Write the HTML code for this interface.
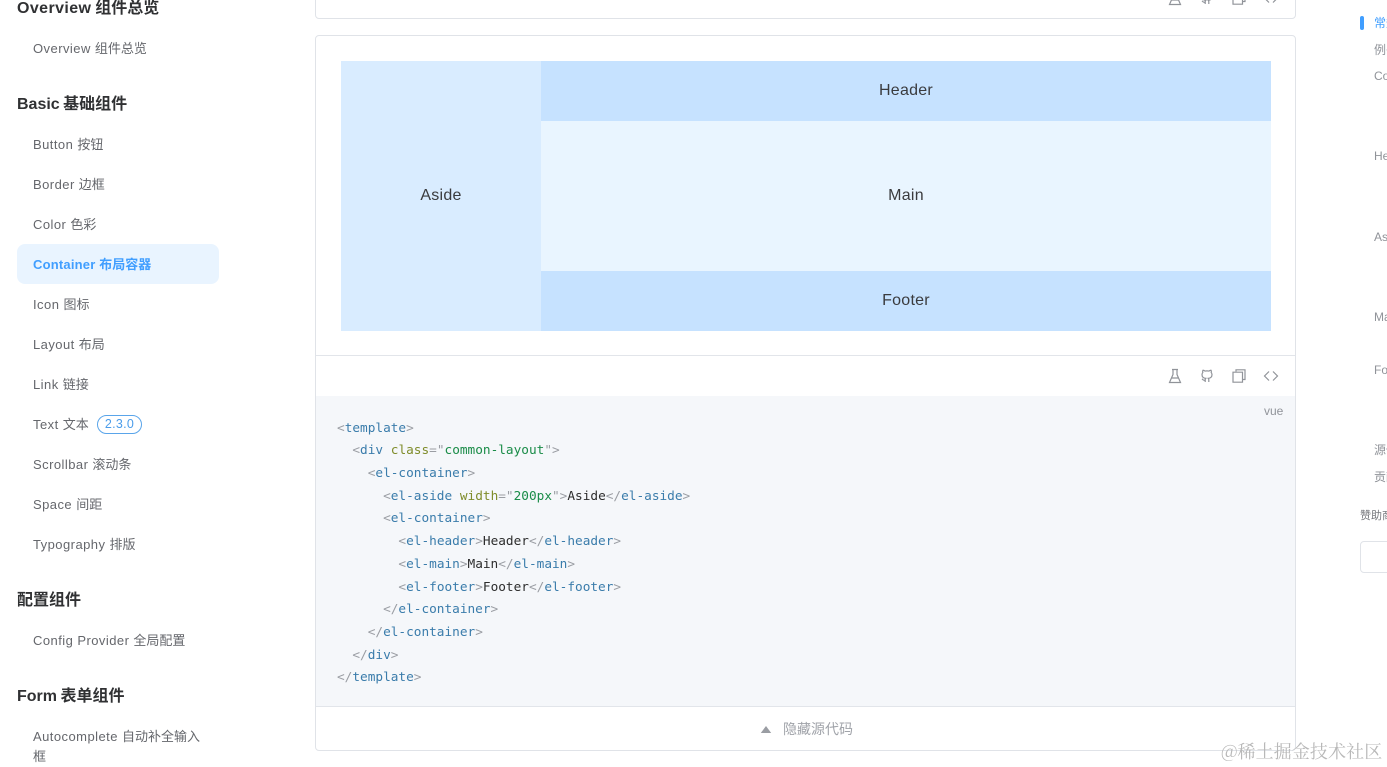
<!DOCTYPE html>
<html><head><meta charset="utf-8"><style>
html,body{margin:0;padding:0;background:#fff}
body{position:relative;width:1387px;height:767px;overflow:hidden;font-family:"Liberation Sans","Noto Sans CJK SC",sans-serif}
.a{position:absolute;white-space:nowrap}
em{font-style:normal;letter-spacing:0}
.h{left:17px;height:24px;line-height:24px;font-size:16px;font-weight:700;color:#303133;word-spacing:-1px}
.i{left:33px;height:20px;line-height:20px;font-size:13px;letter-spacing:.45px;color:#65676c}
.t{left:1374px;height:16px;line-height:16px;font-size:12px;color:#909399}
.c{height:24px;line-height:24px;font-size:16px;letter-spacing:.25px;color:#3a3b3e;text-align:center}
pre{position:absolute;margin:0;left:337px;top:417.500px;font:12.75px/22.72px "DejaVu Sans Mono",monospace;color:#2c2c2c}
pre b{font-weight:400;color:#9a9da3}pre i{font-style:normal;color:#3a7cab}pre u{text-decoration:none;color:#7f8c2a}pre s{text-decoration:none;color:#1a8c48}
svg{position:absolute;fill:none;stroke:#909399;stroke-width:1.200}
</style></head><body>
<div class="a h" style="top:-3px;letter-spacing:.4px">Overview <em>组件总览</em></div>
<div class="a i" style="top:39px">Overview <em>组件总览</em></div>
<div class="a h" style="top:93px">Basic <em>基础组件</em></div>
<div class="a i" style="top:135px">Button <em>按钮</em></div>
<div class="a i" style="top:175px">Border <em>边框</em></div>
<div class="a i" style="top:215px">Color <em>色彩</em></div>
<div class="a" style="left:17px;top:244px;width:202px;height:40px;background:#e9f4ff;border-radius:8px"></div>
<div class="a i" style="top:255px;color:#409eff;font-weight:700;letter-spacing:.2px">Container <em>布局容器</em></div>
<div class="a i" style="top:295px">Icon <em>图标</em></div>
<div class="a i" style="top:335px">Layout <em>布局</em></div>
<div class="a i" style="top:375px">Link <em>链接</em></div>
<div class="a i" style="top:415px">Text <em>文本</em></div>
<div class="a" style="left:97px;top:415px;width:43px;height:17px;line-height:17px;border:1px solid #5aa5ea;border-radius:10px;text-align:center;font-size:12.500px;color:#4a9cea;letter-spacing:.3px">2.3.0</div>
<div class="a i" style="top:455px">Scrollbar <em>滚动条</em></div>
<div class="a i" style="top:495px">Space <em>间距</em></div>
<div class="a i" style="top:535px">Typography <em>排版</em></div>
<div class="a h" style="top:589px">配置组件</div>
<div class="a i" style="top:631px">Config Provider <em>全局配置</em></div>
<div class="a h" style="top:685px">Form <em>表单组件</em></div>
<div class="a i" style="top:727px">Autocomplete <em>自动补全输入</em></div>
<div class="a i" style="top:747px"><em>框</em></div>

<div class="a" style="left:315px;top:-20px;width:979px;height:37px;border:1px solid #e0e3e8;border-radius:4px"></div>
<div class="a" style="left:315px;top:35px;width:979px;height:714px;border:1px solid #e0e3e8;border-radius:4px"></div>
<div class="a" style="left:341px;top:61px;width:200px;height:270px;background:#d9ecff"></div>
<div class="a" style="left:541px;top:61px;width:730px;height:60px;background:#c6e2ff"></div>
<div class="a" style="left:541px;top:121px;width:730px;height:150px;background:#e9f5ff"></div>
<div class="a" style="left:541px;top:271px;width:730px;height:60px;background:#c6e2ff"></div>
<div class="a c" style="left:341px;top:184px;width:200px">Aside</div>
<div class="a c" style="left:541px;top:79px;width:730px">Header</div>
<div class="a c" style="left:541px;top:184px;width:730px">Main</div>
<div class="a c" style="left:541px;top:289px;width:730px">Footer</div>
<div class="a" style="left:316px;top:355px;width:979px;height:1px;background:#e2e5ea"></div>
<div class="a" style="left:316px;top:396px;width:979px;height:310px;background:#f5f7fa"></div>
<div class="a" style="left:316px;top:706px;width:979px;height:1px;background:#e2e5ea"></div>
<div class="a" style="left:1264px;top:404px;font-size:12px;line-height:14px;color:#909399">vue</div>
<pre><b>&lt;</b><i>template</i><b>&gt;</b>
  <b>&lt;</b><i>div</i> <u>class</u><b>="</b><s>common-layout</s><b>"&gt;</b>
    <b>&lt;</b><i>el-container</i><b>&gt;</b>
      <b>&lt;</b><i>el-aside</i> <u>width</u><b>="</b><s>200px</s><b>"&gt;</b>Aside<b>&lt;/</b><i>el-aside</i><b>&gt;</b>
      <b>&lt;</b><i>el-container</i><b>&gt;</b>
        <b>&lt;</b><i>el-header</i><b>&gt;</b>Header<b>&lt;/</b><i>el-header</i><b>&gt;</b>
        <b>&lt;</b><i>el-main</i><b>&gt;</b>Main<b>&lt;/</b><i>el-main</i><b>&gt;</b>
        <b>&lt;</b><i>el-footer</i><b>&gt;</b>Footer<b>&lt;/</b><i>el-footer</i><b>&gt;</b>
      <b>&lt;/</b><i>el-container</i><b>&gt;</b>
    <b>&lt;/</b><i>el-container</i><b>&gt;</b>
  <b>&lt;/</b><i>div</i><b>&gt;</b>
<b>&lt;/</b><i>template</i><b>&gt;</b></pre>

<svg style="left:1167px;top:368px" width="16" height="16" viewBox="0 0 16 16"><path d="M5 1.500h6M6 1.500v5L2.500 14.500h11L10 6.500v-5M4.500 10h7"/></svg>
<svg style="left:1199px;top:368px" width="16" height="16" viewBox="0 0 16 16"><path d="M6.200 14v-2.300c0-.6.200-1 .5-1.300-2-.2-3.700-1-3.700-3.900 0-.8.3-1.500.8-2-.1-.3-.3-1.100.1-2.200 0 0 .7-.2 2.200.8a7.500 7.500 0 0 1 3.800 0c1.500-1 2.200-.8 2.200-.8.400 1.100.200 1.900.100 2.200.5.500.8 1.200.8 2 0 2.900-1.700 3.700-3.700 3.900.3.300.5.700.5 1.300V14M6.200 12.300c-2 .4-2.600-1-3.200-1.500"/></svg>
<svg style="left:1231px;top:368px" width="16" height="16" viewBox="0 0 16 16"><path d="M5 3.500V1.800h9v9.700h-2.500M2 4.200h9.500v10H2z"/></svg>
<svg style="left:1263px;top:368px" width="16" height="16" viewBox="0 0 16 16"><path d="M6 3.500L1.500 8 6 12.500M10 3.500L14.500 8 10 12.500"/></svg>
<svg style="left:1167px;top:-10px" width="16" height="16" viewBox="0 0 16 16"><path d="M5 1.500h6M6 1.500v5L2.500 14.500h11L10 6.500v-5M4.500 10h7"/></svg>
<svg style="left:1199px;top:-10px" width="16" height="16" viewBox="0 0 16 16"><path d="M6.200 14v-2.300c0-.6.200-1 .5-1.300-2-.2-3.700-1-3.700-3.900 0-.8.3-1.500.8-2-.1-.3-.3-1.100.1-2.200 0 0 .7-.2 2.200.8a7.500 7.500 0 0 1 3.800 0c1.500-1 2.200-.8 2.200-.8.400 1.100.200 1.900.100 2.200.5.500.8 1.200.8 2 0 2.900-1.700 3.700-3.700 3.900.3.300.5.700.5 1.300V14M6.200 12.300c-2 .4-2.600-1-3.200-1.500"/></svg>
<svg style="left:1231px;top:-10px" width="16" height="16" viewBox="0 0 16 16"><path d="M5 3.500V1.800h9v9.700h-2.500M2 4.200h9.500v10H2z"/></svg>
<svg style="left:1263px;top:-10px" width="16" height="16" viewBox="0 0 16 16"><path d="M6 3.500L1.500 8 6 12.500M10 3.500L14.500 8 10 12.500"/></svg>

<svg style="left:760px;top:725px" width="12" height="9" viewBox="0 0 12 9"><path d="M.8 8L6 1l5.200 7z" style="fill:#9a9da3;stroke:none"/></svg>
<div class="a" style="left:783px;top:720px;height:18px;line-height:18px;font-size:14px;color:#a0a3a9">隐藏源代码</div>

<div class="a" style="left:1360px;top:16px;width:4px;height:14px;border-radius:2px;background:#409eff"></div>
<div class="a t" style="top:15px;color:#409eff">常规布局</div>
<div class="a t" style="top:42px">例子</div>
<div class="a t" style="top:68px">Container</div>
<div class="a t" style="top:148px">Header</div>
<div class="a t" style="top:229px">Aside</div>
<div class="a t" style="top:309px">Main</div>
<div class="a t" style="top:362px">Footer</div>
<div class="a t" style="top:442px">源代码</div>
<div class="a t" style="top:469px">贡献者</div>
<div class="a t" style="left:1360px;top:508px;font-size:11px;color:#75777c">赞助商</div>
<div class="a" style="left:1360px;top:541px;width:60px;height:30px;border:1px solid #e0e3e8;border-radius:4px"></div>
<div class="a" style="left:1221px;top:739px;height:24px;line-height:24px;font-size:18px;letter-spacing:.1px;color:#b8b8b8;font-family:'Noto Serif CJK SC',serif">@稀土掘金技术社区</div>
</body></html>
